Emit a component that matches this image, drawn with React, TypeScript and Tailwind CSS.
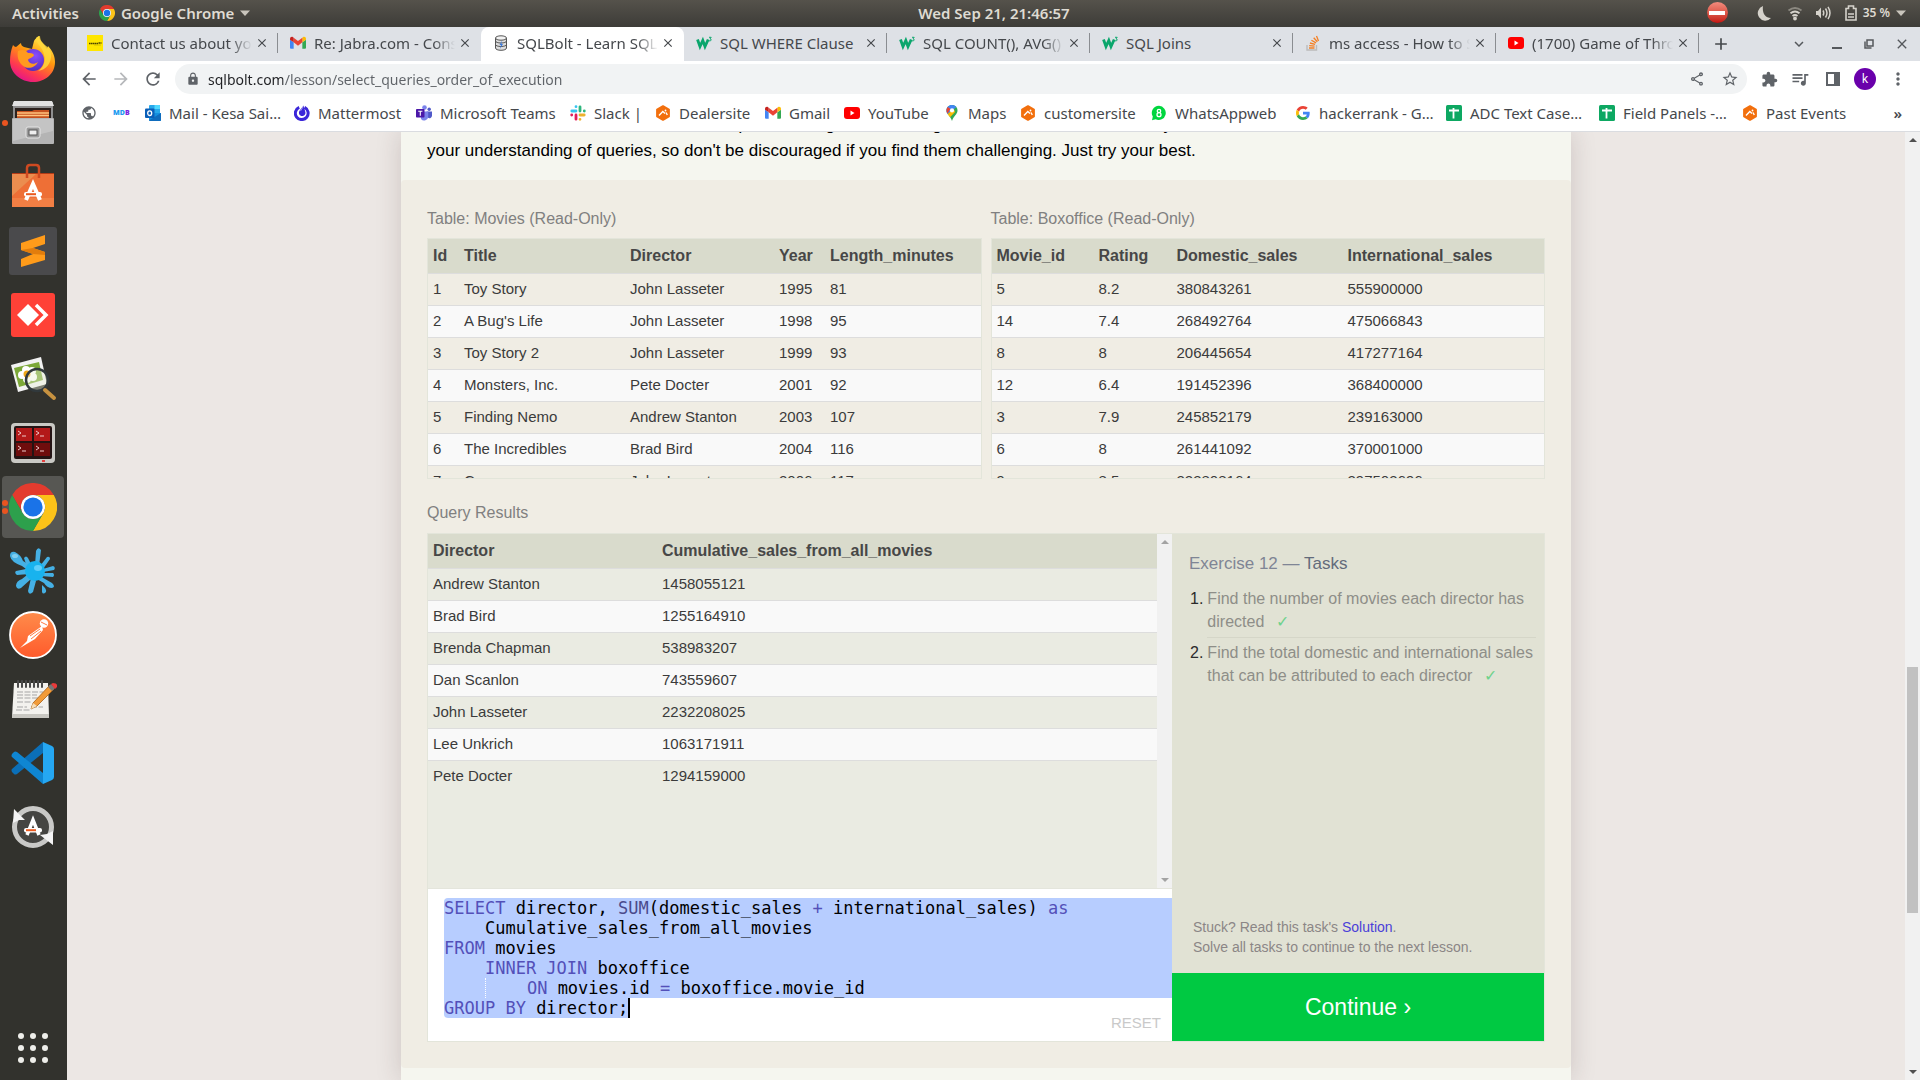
import React from "react";
import {
  MdArrowBack,
  MdArrowForward,
  MdClose,
  MdExpandMore,
  MdExtension,
  MdLock,
  MdMoreVert,
  MdOutlineShare,
  MdPublic,
  MdQueueMusic,
  MdRefresh,
  MdStarBorder,
  MdAdd,
} from "react-icons/md";

/* ---------- small brand icons ---------- */

function Chrome({ className }: { className: string }) {
  return (
    <svg viewBox="0 0 48 48" className={className} aria-hidden="true">
      <path fill="#e33b2e" d="M24 12h20.8A24 24 0 0 0 3.2 12l10.4 18A12 12 0 0 1 24 12z" />
      <path fill="#fcc319" d="M24 12h20.8A24 24 0 0 1 24 48l10.4-18A12 12 0 0 0 24 12z" />
      <path fill="#2da04c" d="M13.6 30 3.2 12A24 24 0 0 0 24 48l10.4-18a12 12 0 0 1-20.8 0z" />
      <circle cx="24" cy="24" r="12" fill="#fff" />
      <circle cx="24" cy="24" r="9.6" fill="#1a73e8" />
    </svg>
  );
}

function Gmail() {
  return (
    <svg viewBox="0 0 24 24" className="size-4 shrink-0" aria-hidden="true">
      <path fill="#4285f4" d="M1.5 20.5h4V11L0 7v12a1.5 1.5 0 0 0 1.500 1.500z" />
      <path fill="#34a853" d="M18.500 20.500h4A1.500 1.500 0 0 0 24 19V7l-5.500 4z" />
      <path fill="#fbbc04" d="M18.500 4v7L24 7V5.500c0-2.400-2.700-3.700-4.500-2.300z" />
      <path fill="#ea4335" d="M5.500 11V4L12 9l6.500-5v7L12 16z" />
      <path fill="#c5221f" d="M0 5.500V7l5.500 4V4l-1-.8C2.700 1.800 0 3.100 0 5.500z" />
    </svg>
  );
}

function YouTube() {
  return (
    <svg viewBox="0 0 16 16" className="size-4 shrink-0" aria-hidden="true">
      <rect x="0" y="2" width="16" height="12" rx="3" fill="#f00" />
      <path d="M6.500 5.500v5l4-2.500z" fill="#fff" />
    </svg>
  );
}

function W3() {
  return (
    <svg viewBox="0 0 16 16" className="size-4 shrink-0" fill="none" stroke="#0aa66c" aria-hidden="true">
      <path d="M1.500 4.500 4 11.500 6.800 5.500 9 11.500 12.200 4.500" strokeWidth="2.800" />
      <path d="M13 2.300h2.200L14 3.900c1.700 0 1.700 2.300-.9 2" strokeWidth="1" />
    </svg>
  );
}

function Database() {
  return (
    <svg viewBox="0 0 16 16" className="size-4 shrink-0" aria-hidden="true">
      <path d="M2.500 3v10c0 1.400 2.500 2.300 5.500 2.300s5.500-.9 5.500-2.300V3" fill="#ddd" stroke="#555" />
      <path d="M2.500 6c0 1.200 2.500 2 5.500 2s5.500-.8 5.500-2M2.500 9.500c0 1.200 2.500 2 5.500 2s5.500-.8 5.500-2" fill="none" stroke="#555" />
      <ellipse cx="8" cy="3" rx="5.500" ry="2.200" fill="#f2f2f2" stroke="#555" />
      <path d="M9 5.500 6.500 10H8l-1 4 3-5H8.300z" fill="#3d7bdc" />
    </svg>
  );
}

function Jabra() {
  return (
    <svg viewBox="0 0 16 16" className="size-4 shrink-0" aria-hidden="true">
      <rect width="16" height="16" fill="#ffe600" />
      <path d="M2 8.500h9M11.500 8h3" stroke="#4b4400" strokeWidth="1.500" strokeDasharray="1.500 .4" />
      <path d="M7 10h7" stroke="#b5a400" strokeWidth=".6" />
    </svg>
  );
}

function StackOverflow() {
  return (
    <svg viewBox="0 0 16 16" className="size-4 shrink-0" fill="none" aria-hidden="true">
      <path d="M2 10v5h9.500v-5" stroke="#bcbbbb" strokeWidth="1.400" />
      <path d="M4 13h5.500M4.200 10.600l5.400.6M4.900 8l5.200 1.400M6.400 5.200l4.600 2.700M8.700 2.800l3.600 4M11.500 1l2 5" stroke="#f48024" strokeWidth="1.300" />
    </svg>
  );
}

function Outlook() {
  return (
    <svg viewBox="0 0 16 16" className="size-4 shrink-0" aria-hidden="true">
      <path d="M5 0h9a1 1 0 0 1 1 1v7H4V1a1 1 0 0 1 1-1z" fill="#28a8ea" />
      <path d="M9.500 0H14a1 1 0 0 1 1 1v3H9.500z" fill="#50d9ff" />
      <path d="M4 8h12v7a1 1 0 0 1-1 1H5a1 1 0 0 1-1-1z" fill="#1490df" />
      <path d="M16 8 4 15.500c.2.300.5.500 1 .5h10a1 1 0 0 0 1-1z" fill="#0f6cbd" />
      <rect x="0" y="3.500" width="9.500" height="9.500" rx="1" fill="#0a5fb8" />
      <ellipse cx="4.700" cy="8.200" rx="2" ry="2.300" fill="none" stroke="#fff" strokeWidth="1.300" />
    </svg>
  );
}

function Mattermost() {
  return (
    <svg viewBox="0 0 16 16" className="size-4 shrink-0" aria-hidden="true">
      <path d="M10.500 2.400A6.400 6.400 0 1 1 5.200 2.300" fill="none" stroke="#3b26d9" strokeWidth="3" />
      <path d="M9.600.5 5.900 5.200C3.800 8 5.600 11 8.200 11c2.500 0 3.800-2.200 3-4.500z" fill="#3b26d9" />
      <path d="M9.300 1.500 6.500 6" stroke="#fff" strokeWidth=".5" />
    </svg>
  );
}

function Teams() {
  return (
    <svg viewBox="0 0 16 16" className="size-4 shrink-0" aria-hidden="true">
      <circle cx="13.200" cy="4.200" r="1.700" fill="#5059c9" />
      <circle cx="8.500" cy="2.500" r="2.300" fill="#7b83eb" />
      <path d="M10.500 6.500H16v4.300a2.600 2.600 0 0 1-4 2z" fill="#5059c9" />
      <path d="M5 6.500h7.200v5a4 4 0 0 1-7.200 2.400z" fill="#7b83eb" />
      <rect x="0" y="4" width="8.500" height="8.500" rx=".8" fill="#4b18a8" />
      <path d="M2.200 6.300h4.200M4.300 6.300v4.400" stroke="#fff" strokeWidth="1.100" />
    </svg>
  );
}

function Slack() {
  return (
    <svg viewBox="0 0 16 16" className="size-4 shrink-0" fill="none" strokeWidth="2.800" strokeLinecap="round" aria-hidden="true">
      <path d="M6 1.700h.01M1.800 6H6" stroke="#36c5f0" />
      <path d="M10 1.800V6M14.300 6h.01" stroke="#2eb67d" />
      <path d="M10 10h4.200M10 14.300h.01" stroke="#ecb22e" />
      <path d="M6 10v4.200M1.700 10h.01" stroke="#e01e5a" />
    </svg>
  );
}

function Hexagon() {
  return (
    <svg viewBox="0 0 16 16" className="size-4 shrink-0" aria-hidden="true">
      <path d="M8 1.200 13.900 4.600v6.800L8 14.800l-5.900-3.400V4.600z" fill="#f26f0d" stroke="#f26f0d" strokeWidth="2" strokeLinejoin="round" />
      <path d="m4 10.500 3.800-4 2.200 2M11 7.500l1.300 2.500" fill="none" stroke="#fff" strokeWidth="1.400" />
      <circle cx="10.500" cy="5.500" r=".9" fill="#fff" />
    </svg>
  );
}

function Maps() {
  return (
    <svg viewBox="0 0 16 16" className="size-4 shrink-0" aria-hidden="true">
      <path d="M8 0C4.700 0 2.500 2.500 2.500 5.400c0 4 4 5.200 5.500 10.600 1.500-5.400 5.500-6.600 5.500-10.600C13.500 2.500 11.300 0 8 0z" fill="#34a853" />
      <path d="M8 0c1.800 0 3.400.7 4.400 2L3.700 9.100C2.900 8.200 2.500 7 2.500 5.400 2.500 2.500 4.700 0 8 0z" fill="#4285f4" />
      <path d="M3.800 1.900 6.500 4 3.500 8.600c-.7-.9-1-2-1-3.200 0-1.300.5-2.500 1.300-3.500z" fill="#ea4335" />
      <path d="m3.600 9 6-5 1.500 3L6 12.200C5.200 10.800 4.300 10 3.600 9z" fill="#fbbc04" />
      <circle cx="8" cy="5.400" r="2.100" fill="#fff" />
    </svg>
  );
}

function WhatsApp() {
  return (
    <svg viewBox="0 0 16 16" className="size-4 shrink-0" aria-hidden="true">
      <path d="M8 .8A7.100 7.100 0 0 0 1.800 11.500L1 15.200l3.600-.9A7.100 7.100 0 1 0 8 .8z" fill="#00d63f" />
      <circle cx="8" cy="6" r="1.700" fill="none" stroke="#fff" strokeWidth="1.300" />
      <circle cx="8" cy="9.700" r="2" fill="none" stroke="#fff" strokeWidth="1.300" />
    </svg>
  );
}

function Google() {
  return (
    <svg viewBox="0 0 48 48" className="mx-px size-3.5 shrink-0" aria-hidden="true">
      <path fill="#ea4335" d="M24 9.500c3.540 0 6.710 1.220 9.210 3.600l6.850-6.850C35.900 2.380 30.470 0 24 0 14.620 0 6.510 5.380 2.560 13.220l7.980 6.190C12.430 13.720 17.740 9.500 24 9.500z" />
      <path fill="#4285f4" d="M46.980 24.550c0-1.570-.15-3.090-.38-4.550H24v9.020h12.940c-.58 2.960-2.260 5.480-4.780 7.180l7.730 6c4.510-4.180 7.090-10.360 7.090-17.650z" />
      <path fill="#fbbc05" d="M10.530 28.590c-.48-1.450-.76-2.990-.76-4.590s.27-3.140.76-4.590l-7.980-6.190C.92 16.460 0 20.120 0 24c0 3.880.92 7.540 2.560 10.780z" />
      <path fill="#34a853" d="M24 48c6.480 0 11.930-2.130 15.890-5.810l-7.730-6c-2.150 1.450-4.920 2.300-8.160 2.300-6.260 0-11.570-4.220-13.470-9.910l-7.980 6.190C6.510 42.620 14.620 48 24 48z" />
    </svg>
  );
}

function Sheets() {
  return (
    <svg viewBox="0 0 16 16" className="size-4 shrink-0" aria-hidden="true">
      <rect width="16" height="16" rx="1.500" fill="#0da862" />
      <path d="M3 5.500h10M7.500 3v10.500" stroke="#fff" strokeWidth="1.800" />
    </svg>
  );
}

/* ---------- dock icons ---------- */

const DOCK: { name: string; dots?: number; active?: boolean; art: React.ReactNode }[] = [
  {
    name: "Firefox",
    art: (
      <>
        <defs>
          <linearGradient id="ffBody" x1=".8" y1=".05" x2=".3" y2="1">
            <stop offset="0" stopColor="#fff44f" />
            <stop offset=".4" stopColor="#ff980e" />
            <stop offset=".75" stopColor="#ff3b4e" />
            <stop offset="1" stopColor="#e3128c" />
          </linearGradient>
          <radialGradient id="ffCore" cx=".6" cy=".3" r=".8">
            <stop offset="0" stopColor="#8a4dff" />
            <stop offset="1" stopColor="#4b2bb5" />
          </radialGradient>
        </defs>
        <path d="M4 10c1 1 2 2 3 2 2-1 3-3 5-4 0 2 1 3 3 4l8 2 2-8c1-2 3-4 5-5 0 4 3 6 5 9 1 1 2 3 3 4l1-3c5 5 7 11 7 16 0 12-10 20-22 20S1 38 1 26c0-6 1-11 3-16z" fill="url(#ffBody)" />
        <circle cx="24" cy="25" r="11" fill="url(#ffCore)" />
        <path d="M9 16c4-2 8-1 10 2 2 0 5 0 6 2-1 3-5 3-6 5 1 4 6 5 10 2-3 6-11 8-16 3-4-4-5-9-4-14z" fill="#ff9a1f" />
        <path d="M27 3c0 6 7 9 8 17 2 6-1 13-6 16 8-1 14-8 13-17-1-7-6-8-8-11-2-2-3-4-3-7-2 0-3 1-4 2z" fill="#ffd83d" opacity=".85" />
      </>
    ),
  },
  {
    name: "Files",
    dots: 1,
    art: (
      <>
        <path d="M4 3h40v42H4z" fill="#8f8f8f" />
        <path d="M5 2h38l2 5H3z" fill="#e2e2e2" />
        <rect x="6" y="9" width="36" height="14" fill="#2b211d" />
        <path d="M8 12h15l2-1h15v9H8z" fill="#c5501e" />
        <path d="M8 14h32M8 16.500h32" stroke="#ffc37f" strokeWidth="1.500" />
        <rect x="3" y="19" width="42" height="26" rx="1" fill="#b4b4b4" />
        <path d="M4 20h40v12L4 42z" fill="#cfcfcf" opacity=".6" />
        <rect x="17" y="28" width="14" height="11" rx="2" fill="#9a9a9a" stroke="#e5e5e5" />
        <rect x="20" y="31" width="8" height="5" fill="#eee" stroke="#555" />
      </>
    ),
  },
  {
    name: "Ubuntu Software",
    art: (
      <>
        <path d="M3 10h42v5H3z" fill="#b33b16" />
        <path d="M3 11h42v33H3z" fill="#ee6f36" />
        <path d="M3 11h24L3 33z" fill="#ea9a5a" opacity=".7" />
        <path d="M3 35h42v9H3z" fill="#f58a4f" opacity=".6" />
        <path d="M18 15V5q0-3 3-3h6q3 0 3 3v10" fill="none" stroke="#cf4a21" strokeWidth="2.500" />
        <path d="m17 37 7-16 7 16" fill="none" stroke="#fff" strokeWidth="4" />
        <rect x="15" y="29" width="18" height="4.500" rx="2" fill="#fff" />
        <path d="M17 31.200h10" stroke="#ea5a1f" strokeWidth="2" />
      </>
    ),
  },
  {
    name: "Sublime Text",
    art: (
      <>
        <rect width="48" height="48" rx="3" fill="#4a4a4c" />
        <path d="M12 16 36 8v9l-12 4 12 4v8l-24 7v-8l12-5-12-4z" fill="#ff9b1a" />
        <path d="m24 21 12 4v3l-12-1-12-4z" fill="#e27d0c" />
      </>
    ),
  },
  {
    name: "AnyDesk",
    art: (
      <>
        <rect x="2" y="2" width="44" height="44" rx="3" fill="#ff4137" />
        <path d="m19 13 11 11-11 11L8 24z" fill="#fff" />
        <path d="m27 14 10 10-10 10" fill="none" stroke="#fff" strokeWidth="3.500" />
      </>
    ),
  },
  {
    name: "Image Viewer",
    art: (
      <>
        <path d="m2 10 30-8 6 27-29 8z" fill="#f2f2f2" />
        <path d="m5 13 25-6 4 18-24 7z" fill="#7ca838" />
        <g fill="#fff">
          <circle cx="17" cy="15" r="4" />
          <circle cx="23" cy="16" r="4" />
          <circle cx="13" cy="20" r="4" />
          <circle cx="18" cy="24" r="4" />
          <circle cx="24" cy="22" r="4" />
        </g>
        <circle cx="18" cy="19" r="3.500" fill="#f0a818" />
        <circle cx="28" cy="25" r="11" fill="#e8f0d8" fillOpacity=".4" stroke="#31393c" strokeWidth="2.500" />
        <path d="m36 35 9 8" stroke="#c79240" strokeWidth="4" strokeLinecap="round" />
      </>
    ),
  },
  {
    name: "Terminator",
    art: (
      <>
        <rect x="2" y="4" width="44" height="40" rx="4" fill="#c9c9c4" />
        <rect x="5" y="7" width="38" height="33" rx="2" fill="#241414" />
        <path d="M7 9h16v13H7zM25 9h16v13H25z" fill="#b31919" />
        <path d="M7 24h16v13H7zM25 24h16v13H25z" fill="#6e0d0d" />
        <path d="m9 12 3 2-3 2M13 17h4M27 12l3 2-3 2M31 17h4M9 27l3 2-3 2M13 32h4M27 27l3 2-3 2M31 32h4" fill="none" stroke="#eecaca" />
        <path d="M33 42h3" stroke="#e11" strokeWidth="1.500" />
      </>
    ),
  },
  { name: "Google Chrome", dots: 2, active: true, art: <Chrome className="size-12" /> },
  {
    name: "Splash",
    art: (
      <>
        <g fill="#45b0e4">
          <path d="M24 27 13 19Q2 15 1 9q0-5 5-4 6 3 8 9l12 7z" />
          <path d="m18 20-3-9q2-3 4 0l4 8zM26 18l1-14q2-5 5-1l-2 16zM31 19l7-9q3-1 3 2l-7 10zM34 22l10-3q3 1 1 4l-11 2zM33 26l11 0q2 2 0 4l-12-1zM29 28l14 8q4 4 0 5-5 0-8-5l-9-5zM22 31l5 3-3 11q-4 4-5-1zM18 28l4 4-10 9q-4 2-5-2 0-5 6-7zM17 22l3 5-12 1q-3-2-1-4z" />
          <path d="M33 38q5 4 4 7-3 3-4 0z" />
        </g>
        <circle cx="26" cy="24" r="10" fill="#18b3ee" />
        <ellipse cx="29" cy="21" rx="4" ry="3" fill="#7edcff" opacity=".7" />
        <ellipse cx="6" cy="9" rx="3" ry="2" fill="#9adcf5" opacity=".7" />
      </>
    ),
  },
  {
    name: "Postman",
    art: (
      <>
        <defs>
          <linearGradient id="pm" x1="0" y1="0" x2="0" y2="1">
            <stop offset="0" stopColor="#ff8c4b" />
            <stop offset="1" stopColor="#ff5a2b" />
          </linearGradient>
        </defs>
        <circle cx="24" cy="24" r="23" fill="url(#pm)" stroke="#fff" strokeWidth="1.800" />
        <circle cx="35" cy="12.500" r="4.200" fill="#fff" />
        <path d="m33 15-14 10-1 5-7 7 10-6 5-3 8-9z" fill="#fff" />
        <path d="m21 25 10-7M22 28l10-8M32 11l6 3" stroke="#ff7a45" strokeWidth="1" />
      </>
    ),
  },
  {
    name: "Notes",
    art: (
      <>
        <path d="M5 8h34l1 34H3z" fill="#f3f2ee" />
        <path d="M3 39h37v4H3z" fill="#c9c8c2" />
        <path d="M9 6v6M13 6v6M17 6v6M21 6v6M25 6v6M29 6v6M33 6v6" stroke="#4b4b4b" strokeWidth="2" strokeLinecap="round" />
        <path d="M8 17h26M8 20h20M8 23h25M8 27h14M8 32h10M22 32h12M7 35h14" stroke="#a5a5a5" strokeWidth="1" strokeDasharray="6 1.500" />
        <path d="m22 34 2-6 17-18 4 4-17 17z" fill="#f19b38" stroke="#a85f13" strokeWidth=".8" />
        <path d="m22 34 2-6 4 3z" fill="#f6deb8" />
        <path d="m39 12 3-3 4 4-3 3z" fill="#777" />
        <path d="m42 9 2-1q5 0 4 4l-2 2z" fill="#ea3a3a" />
      </>
    ),
  },
  {
    name: "Visual Studio Code",
    art: (
      <>
        <path d="M34 14v20L20 24z" fill="#32322d" />
        <path d="M34 3v11L8 35q-2 1-3 0l-2-2q-1-2 0-3z" fill="#0b6fb8" />
        <path d="M34 45V34L8 13q-2-1-3 0l-2 2q-1 2 0 3z" fill="#0f86d2" />
        <path d="m34 3 9 4q2 1 2 3v28q0 2-2 3l-9 4z" fill="#25a7f2" />
      </>
    ),
  },
  {
    name: "Software Updater",
    art: (
      <>
        <circle cx="24" cy="24" r="18.500" fill="#454542" stroke="#c9c9c7" strokeWidth="5" />
        <path d="M4 20 5 6l11 11-6 0z" fill="#f4f4f4" />
        <path d="M44 28v14L31 32l7-1z" fill="#f4f4f4" />
        <path d="m18 32 6-15 6 15" fill="none" stroke="#fff" strokeWidth="3.500" />
        <rect x="15" y="25" width="18" height="4.500" rx="2" fill="#fff" />
        <path d="M17 27.200h10" stroke="#ea5a1f" strokeWidth="2" />
      </>
    ),
  },
];

function Dock() {
  return (
    <nav aria-label="Dock" className="flex w-[67px] shrink-0 flex-col bg-[#32322d]">
      {DOCK.map((item) => (
        <button
          key={item.name}
          type="button"
          aria-label={item.name}
          className={
            item.active
              ? "relative my-px ml-0.5 flex h-[62px] w-[62px] shrink-0 items-center justify-center rounded bg-[#575753]"
              : "relative flex h-16 w-[66px] shrink-0 items-center justify-center"
          }
        >
          <svg viewBox="0 0 48 48" className="size-12" aria-hidden="true">
            {item.art}
          </svg>
          {item.dots && (
            <span className={item.active ? "absolute left-0 flex flex-col gap-0.5" : "absolute left-0.5 flex"}>
              <span className="size-1.5 rounded-full bg-[#e95420]" />
              {item.dots > 1 && <span className="size-1.5 rounded-full bg-[#e95420]" />}
            </span>
          )}
        </button>
      ))}
      <button type="button" aria-label="Show Applications" className="mt-auto mb-[17px] ml-[18px] grid w-[30px] grid-cols-3 gap-1.5">
        {Array.from({ length: 9 }, (_, i) => (
          <span key={i} className="size-1.5 rounded-full bg-[#eeeeea]" />
        ))}
      </button>
    </nav>
  );
}

/* ---------- desktop top bar ---------- */

function TopBar() {
  return (
    <header className="grid h-[27px] shrink-0 grid-cols-[1fr_auto_1fr] items-center bg-linear-to-b from-[#55524b] to-[#3d3c38] pb-0.5 text-[15px] leading-5 font-semibold text-[#dfdbd2]">
      <div className="flex items-center pl-3">
        <button type="button">Activities</button>
        <button type="button" className="ml-5 flex items-center">
          <Chrome className="size-4" />
          <span className="ml-1.5">Google Chrome</span>
          <Caret />
        </button>
      </div>
      <time className="pl-[68px]">Wed Sep 21, 21:46:57</time>
      <div className="flex items-center justify-end pr-3.5">
        <span className="mr-[29px] flex size-[21px] items-center justify-center rounded-full bg-linear-to-b from-[#f28b7d] to-[#c40d0d]">
          <span className="h-1 w-4 bg-white" />
        </span>
        <svg viewBox="0 0 16 16" className="mr-3.5 size-4" fill="#d5d2cb" aria-hidden="true">
          <path d="M6 1a7.500 7.500 0 1 0 8 12C8 13 5 8 6 1z" />
        </svg>
        <svg viewBox="0 0 16 16" className="mr-3 size-4" fill="none" stroke="#d5d2cb" strokeWidth="1.800" aria-hidden="true">
          <path d="M1.500 5.500q6.500-5 13 0" stroke="#8b8880" />
          <path d="M3.500 8.300q4.500-3.500 9 0M5.500 11q2.500-2 5 0" />
          <circle cx="8" cy="13.500" r="1" fill="#d5d2cb" />
        </svg>
        <svg viewBox="0 0 16 16" className="mr-3.5 size-4" fill="none" stroke="#d5d2cb" strokeWidth="1.500" aria-hidden="true">
          <path d="M1 6v4h2l3 3.500v-11L3 6z" fill="#d5d2cb" stroke="none" />
          <path d="M8 5.500q1.500 2.500 0 5M10.500 3.500q3 4.500 0 9M13 1.800q4 6.200 0 12.400" />
        </svg>
        <svg viewBox="0 0 12 16" className="mr-1.5 h-4 w-3" fill="none" stroke="#d5d2cb" strokeWidth="1.600" aria-hidden="true">
          <path d="M1 3.500h2.500V1h5v2.500H11V15H1zM3 12h6M3 9h6" />
        </svg>
        <span className="text-xs leading-5">35 %</span>
        <Caret />
      </div>
    </header>
  );
}

function Caret() {
  return (
    <svg viewBox="0 0 10 6" className="ml-1.5 h-1.5 w-2.5" fill="#c9c5bc" aria-hidden="true">
      <path d="M0 .5h10L5 6z" />
    </svg>
  );
}

/* ---------- browser chrome ---------- */

const TABS = [
  { title: "Contact us about your", icon: <Jabra /> },
  { title: "Re: Jabra.com - Cons", icon: <Gmail />, noRule: true },
  { title: "SQLBolt - Learn SQL", icon: <Database />, active: true },
  { title: "SQL WHERE Clause", icon: <W3 />, full: true },
  { title: "SQL COUNT(), AVG()", icon: <W3 /> },
  { title: "SQL Joins", icon: <W3 />, full: true },
  { title: "ms access - How to S", icon: <StackOverflow /> },
  { title: "(1700) Game of Thro", icon: <YouTube /> },
];

function TabStrip() {
  return (
    <div className="flex h-[34px] shrink-0 bg-[#dee1e6] pl-2">
      <div role="tablist" className="flex min-w-0">
        {TABS.map((tab) => (
          <div
            key={tab.title}
            role="tab"
            aria-selected={!!tab.active}
            className={
              tab.active
                ? "flex w-[203px] min-w-0 items-center rounded-t-lg bg-white pb-0.5 pl-3"
                : "flex w-[203px] min-w-0 items-center pb-0.5 pl-3"
            }
          >
            {tab.icon}
            <span
              className={
                tab.full
                  ? "ml-2 min-w-0 flex-1 overflow-hidden text-[15px] leading-5 whitespace-nowrap text-[#45484c]"
                  : "ml-2 min-w-0 flex-1 overflow-hidden mask-r-from-85% text-[15px] leading-5 whitespace-nowrap text-[#45484c]"
              }
            >
              {tab.title}
            </span>
            <button type="button" aria-label={"Close " + tab.title} className="ml-0.5 flex size-4 shrink-0 items-center justify-center text-[#45484c]">
              <MdClose className="size-3.5" />
            </button>
            <span className={tab.active || tab.noRule ? "ml-[7px] h-5 w-px" : "ml-[7px] h-5 w-px bg-[#8a8d91]"} />
          </div>
        ))}
      </div>
      <button type="button" aria-label="New tab" className="ml-3 text-[#45484c]">
        <MdAdd className="size-5" />
      </button>
      <div className="ml-auto flex items-center text-[#55585c]">
        <button type="button" aria-label="Search tabs" className="mr-6">
          <MdExpandMore className="size-[18px]" />
        </button>
        <button type="button" aria-label="Minimize" className="mt-2 mr-[22px] h-0.5 w-2.5 bg-[#55585c]" />
        <button type="button" aria-label="Restore" className="mr-5">
          <svg viewBox="0 0 10 10" className="size-2.5" fill="none" stroke="currentColor" strokeWidth="1.500" aria-hidden="true">
            <path d="M3 1h6v6H3zM1 2.500V9h6.500" />
          </svg>
        </button>
        <button type="button" aria-label="Close window" className="mr-2.5">
          <MdClose className="size-4" />
        </button>
      </div>
    </div>
  );
}

function Toolbar() {
  return (
    <div className="flex h-9 shrink-0 items-center bg-white pr-3 pl-3 text-[#5f6368]">
      <div className="flex items-center gap-3">
        <button type="button" aria-label="Back"><MdArrowBack className="size-5" /></button>
        <button type="button" aria-label="Forward" className="text-[#b6b8bb]"><MdArrowForward className="size-5" /></button>
        <button type="button" aria-label="Reload"><MdRefresh className="size-5" /></button>
      </div>
      <div className="ml-3 flex h-[30px] flex-1 items-center rounded-full bg-[#f1f3f4] pr-2 pl-[11px]">
        <MdLock className="size-3.5" />
        <input
          aria-label="Address and search bar"
          defaultValue="sqlbolt.com/lesson/select_queries_order_of_execution"
          className="ml-2 h-full min-w-0 flex-1 bg-transparent bg-[linear-gradient(90deg,#202124_75px,#5f6368_75px)] bg-clip-text text-sm text-transparent outline-none"
        />
        <button type="button" aria-label="Share"><MdOutlineShare className="size-4" /></button>
        <button type="button" aria-label="Bookmark this page" className="ml-4"><MdStarBorder className="size-[18px]" /></button>
      </div>
      <button type="button" aria-label="Extensions" className="ml-3.5"><MdExtension className="size-[17px]" /></button>
      <button type="button" aria-label="Media control" className="ml-3"><MdQueueMusic className="size-5" /></button>
      <button type="button" aria-label="Side panel" className="ml-4">
        <span className="block size-3.5 border-2 border-r-[6px] border-[#5f6368]" />
      </button>
      <button type="button" aria-label="Profile" className="ml-3.5 flex size-[22px] items-center justify-center rounded-full bg-[#6a00ab] text-xs text-white">
        k
      </button>
      <button type="button" aria-label="Menu" className="ml-3"><MdMoreVert className="size-5" /></button>
    </div>
  );
}

const BOOKMARKS = [
  { label: "Mail - Kesa Sai…", icon: <Outlook />, width: "w-[149px]" },
  { label: "Mattermost", icon: <Mattermost />, width: "w-[122px]" },
  { label: "Microsoft Teams", icon: <Teams />, width: "w-[154px]" },
  { label: "Slack |", icon: <Slack />, width: "w-[85px]" },
  { label: "Dealersite", icon: <Hexagon />, width: "w-[110px]" },
  { label: "Gmail", icon: <Gmail />, width: "w-[79px]" },
  { label: "YouTube", icon: <YouTube />, width: "w-[100px]" },
  { label: "Maps", icon: <Maps />, width: "w-[76px]" },
  { label: "customersite", icon: <Hexagon />, width: "w-[131px]" },
  { label: "WhatsAppweb", icon: <WhatsApp />, width: "w-[144px]" },
  { label: "hackerrank - G…", icon: <Google />, width: "w-[151px]" },
  { label: "ADC Text Case…", icon: <Sheets />, width: "w-[153px]" },
  { label: "Field Panels -…", icon: <Sheets />, width: "w-[143px]" },
  { label: "Past Events", icon: <Hexagon />, width: "w-[110px]" },
];

function BookmarksBar() {
  return (
    <div className="flex h-[35px] shrink-0 items-center border-b border-[#dadce0] bg-white pr-4 pb-0.5 pl-3.5 text-[15px] leading-5 whitespace-nowrap text-[#45484c]">
      <a href="#globe" aria-label="Web"><MdPublic className="size-4 text-[#5f6368]" /></a>
      <a href="#mdb" className="ml-4 w-4 text-[7px] font-black text-[#7a1fe0]">
        <span className="text-[#1d9bf0]">MD</span>B
      </a>
      <div className="ml-4 flex min-w-0 flex-1 overflow-hidden">
        {BOOKMARKS.map((b) => (
          <a key={b.label} href={"#" + b.label.split(" ")[0]} className={"flex shrink-0 items-center gap-2 " + b.width}>
            {b.icon}
            {b.label}
          </a>
        ))}
      </div>
      <button type="button" aria-label="More bookmarks" className="mr-0.5 font-semibold">»</button>
    </div>
  );
}

/* ---------- lesson page ---------- */

const MOVIES = [
  ["1", "Toy Story", "John Lasseter", "1995", "81"],
  ["2", "A Bug's Life", "John Lasseter", "1998", "95"],
  ["3", "Toy Story 2", "John Lasseter", "1999", "93"],
  ["4", "Monsters, Inc.", "Pete Docter", "2001", "92"],
  ["5", "Finding Nemo", "Andrew Stanton", "2003", "107"],
  ["6", "The Incredibles", "Brad Bird", "2004", "116"],
  ["7", "Cars", "John Lasseter", "2006", "117"],
];

const BOXOFFICE = [
  ["5", "8.2", "380843261", "555900000"],
  ["14", "7.4", "268492764", "475066843"],
  ["8", "8", "206445654", "417277164"],
  ["12", "6.4", "191452396", "368400000"],
  ["3", "7.9", "245852179", "239163000"],
  ["6", "8", "261441092", "370001000"],
  ["9", "8.5", "223808164", "297503696"],
];

const RESULTS = [
  ["Andrew Stanton", "1458055121"],
  ["Brad Bird", "1255164910"],
  ["Brenda Chapman", "538983207"],
  ["Dan Scanlon", "743559607"],
  ["John Lasseter", "2232208025"],
  ["Lee Unkrich", "1063171911"],
  ["Pete Docter", "1294159000"],
];

function DataTable({ label, columns, rows }: { label: string; columns: [string, string][]; rows: string[][] }) {
  return (
    <table aria-label={label} className="w-full table-fixed text-left text-[#3b3b3b]">
      <thead>
        <tr className="h-[34px] bg-[#d9dbcc] text-base text-[#474747]">
          {columns.map(([name, width]) => (
            <th key={name} className={"py-0 pl-[5px] font-bold " + width}>{name}</th>
          ))}
        </tr>
      </thead>
      <tbody>
        {rows.map((row) => (
          <tr key={row[0]} className="h-8 border-t border-[#dddddd] text-[15px] leading-5 even:bg-[#f9f9f9]">
            {row.map((cell, i) => (
              <td key={i} className="py-0 pl-[5px]">{cell}</td>
            ))}
          </tr>
        ))}
      </tbody>
    </table>
  );
}

function Arrow({ up, dark }: { up?: boolean; dark?: boolean }) {
  return (
    <svg viewBox="0 0 8 4" className="h-1 w-2" fill={dark ? "#505050" : "#a3a3a3"} aria-hidden="true">
      <path d={up ? "M0 4h8L4 0z" : "M0 0h8L4 4z"} />
    </svg>
  );
}

function Kw({ children }: { children: React.ReactNode }) {
  return <span className="text-[#5350b9]">{children}</span>;
}

function Editor() {
  return (
    <div className="relative flex-1 border-t border-[#e4e5dc] bg-white pt-[9px] pl-4">
      <div
        role="textbox"
        aria-label="SQL query"
        aria-multiline="true"
        contentEditable
        suppressContentEditableWarning
        spellCheck={false}
        className="font-['DejaVu_Sans_Mono',monospace] text-[17px] leading-5 whitespace-pre text-black outline-none"
      >
        <div className="rounded-tl bg-[#b7cdff]"><Kw>SELECT</Kw> director, <span className="text-[#4a4a8c]">SUM</span>(domestic_sales <Kw>+</Kw> international_sales) <Kw>as</Kw></div>
        <div className="bg-[#b7cdff]">{"    "}Cumulative_sales_from_all_movies</div>
        <div className="bg-[#b7cdff]"><Kw>FROM</Kw> movies</div>
        <div className="bg-[#b7cdff]">{"    "}<Kw>INNER JOIN</Kw> boxoffice</div>
        <div className="bg-[#b7cdff]">
          <span className="inline-block border-r border-dotted border-white">{"    "}</span>{"    "}<Kw>ON</Kw> movies.id <Kw>=</Kw> boxoffice.movie_id
        </div>
        <div className="w-fit rounded-bl border-r-2 border-black bg-[#b7cdff]"><Kw>GROUP BY</Kw> director;</div>
      </div>
      <button type="button" className="absolute right-[11px] bottom-2 text-[15px] leading-5 text-[#c9c9c9]">RESET</button>
    </div>
  );
}

function Task({ n, last, children }: { n: number; last?: boolean; children: React.ReactNode }) {
  return (
    <li className="flex gap-1">
      <span className="text-[#2b2b2b]">{n}.</span>
      <span className={last ? "flex-1 text-[#8e8e88]" : "mb-[3px] flex-1 border-b border-[#d5d6c8] pb-1 text-[#8e8e88]"}>
        {children}
        <span className="ml-3 text-[#6fd28c]">✓</span>
      </span>
    </li>
  );
}

function Lesson() {
  return (
    <article className="mx-auto flex min-h-full w-full max-w-[1170px] flex-col bg-[#f5f6ef] shadow-[0_0_24px_rgba(60,40,40,0.18)]">
      <p className="-mt-5 mb-4 max-w-[888px] px-[26px] text-[17px] leading-[26px] text-black">
        And there ends our lessons on SELECT queries, congrats of making it this far! This exercise will try and test your understanding of queries, so don't be discouraged if you find them challenging. Just try your best.
      </p>
      <section className="rounded bg-[#f0ede4] px-[26px] pt-[27px] pb-[26px]">
        <div className="grid grid-cols-2 gap-[9px]">
          <div>
            <h2 className="mb-[7px] text-base leading-6 text-[#808080]">Table: Movies (Read-Only)</h2>
            <div className="h-[241px] overflow-hidden border border-[#e3e5da]">
              <DataTable
                label="Movies"
                rows={MOVIES}
                columns={[["Id", "w-[31px]"], ["Title", "w-[166px]"], ["Director", "w-[149px]"], ["Year", "w-[51px]"], ["Length_minutes", "w-auto"]]}
              />
            </div>
          </div>
          <div>
            <h2 className="mb-[7px] text-base leading-6 text-[#808080]">Table: Boxoffice (Read-Only)</h2>
            <div className="h-[241px] overflow-hidden border border-[#e3e5da]">
              <DataTable
                label="Boxoffice"
                rows={BOXOFFICE}
                columns={[["Movie_id", "w-[102px]"], ["Rating", "w-[78px]"], ["Domestic_sales", "w-[171px]"], ["International_sales", "w-auto"]]}
              />
            </div>
          </div>
        </div>
        <h2 className="mt-[22px] mb-2 text-base leading-6 text-[#808080]">Query Results</h2>
        <div className="grid grid-cols-[2fr_1fr] border border-[#e3e5da]">
          <div className="flex min-h-[507px] flex-col">
            <div className="flex h-[354px] bg-[#eaebe2]">
              <div className="min-w-0 flex-1">
                <DataTable
                  label="Query results"
                  rows={RESULTS}
                  columns={[["Director", "w-[229px]"], ["Cumulative_sales_from_all_movies", "w-auto"]]}
                />
              </div>
              <div className="flex w-[15px] flex-col items-center justify-between bg-[#f1f1f1] py-1.5">
                <Arrow up />
                <Arrow />
              </div>
            </div>
            <Editor />
          </div>
          <aside className="flex flex-col bg-[#e1e2d4]">
            <h3 className="mt-4 ml-[17px] text-[17px] leading-7 text-[#7f8595]">
              Exercise 12 — <span className="text-[#636b7b]">Tasks</span>
            </h3>
            <ol className="mt-[9px] mr-2 ml-[18px] text-base leading-[23px]">
              <Task n={1}>Find the number of movies each director has directed</Task>
              <Task n={2} last>Find the total domestic and international sales that can be attributed to each director</Task>
            </ol>
            <p className="mt-auto mb-4 pl-[21px] text-sm leading-5 text-[#8b8686]">
              Stuck? Read this task's <a href="#solution" className="text-[#4a40d8]">Solution</a>.<br />
              Solve all tasks to continue to the next lesson.
            </p>
            <button type="button" className="h-[68px] bg-[#00c942] text-[23px] text-white">Continue ›</button>
          </aside>
        </div>
      </section>
    </article>
  );
}

export default function App() {
  return (
    <div className="flex h-screen flex-col overflow-hidden font-['Noto_Sans',sans-serif]">
      <TopBar />
      <div className="flex min-h-0 flex-1">
        <Dock />
        <div className="flex min-w-0 flex-1 flex-col">
          <TabStrip />
          <Toolbar />
          <BookmarksBar />
          <div className="flex min-h-0 flex-1 bg-[#ece7e4]">
            <main className="flow-root min-w-0 flex-1 overflow-hidden font-['Liberation_Sans',Arial,sans-serif]">
              <Lesson />
            </main>
            <div className="flex w-[15px] flex-col items-center bg-[#f1f1f1] py-1.5">
              <Arrow up dark />
              <div className="flex-[525]" />
              <div className="w-[11px] flex-[246] bg-[#c1c1c1]" />
              <div className="flex-[157]" />
              <Arrow dark />
            </div>
          </div>
        </div>
      </div>
    </div>
  );
}
